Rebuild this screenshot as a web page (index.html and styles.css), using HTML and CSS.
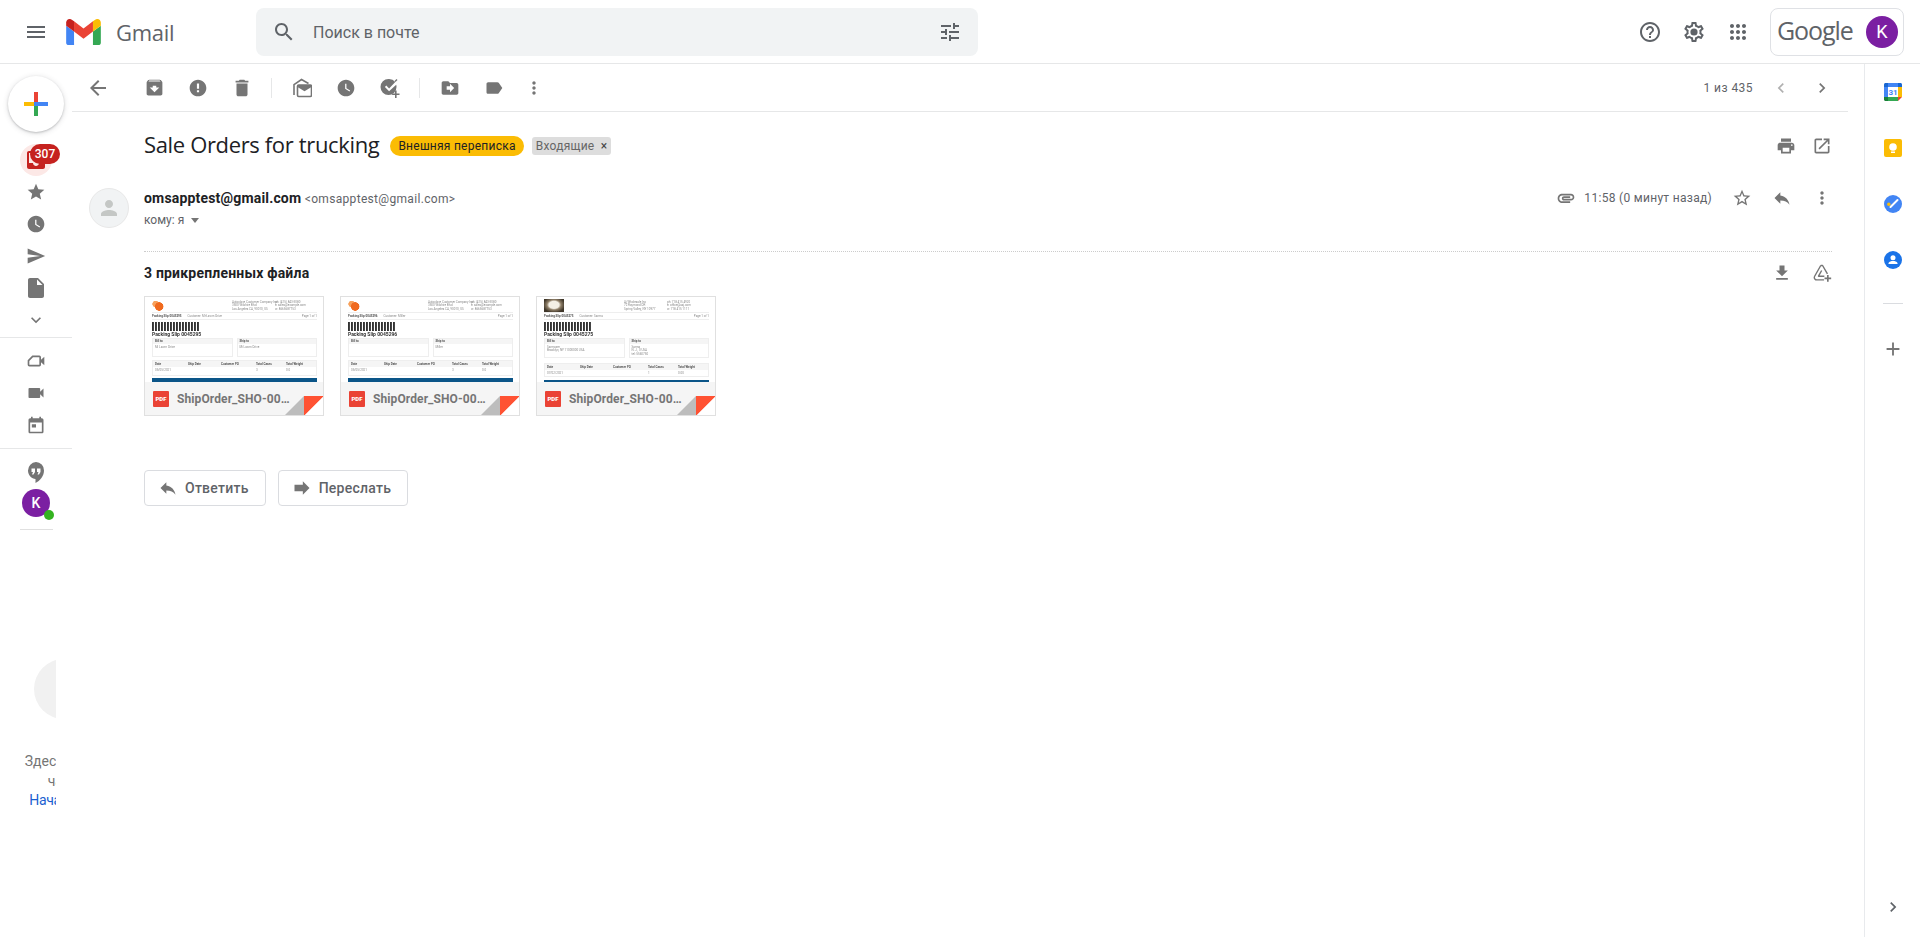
FILE: index.html
```html
<!DOCTYPE html>
<html lang="ru">
<head>
<meta charset="utf-8">
<title>Gmail</title>
<link rel="stylesheet" href="styles.css">
</head>
<body>
<svg class="sprite" aria-hidden="true">
  <symbol id="i-menu" viewBox="0 0 24 24"><path d="M3 18h18v-2H3v2zm0-5h18v-2H3v2zm0-7v2h18V6H3z"/></symbol>
  <symbol id="i-search" viewBox="0 0 24 24"><path d="M15.5 14h-.79l-.28-.27C15.41 12.59 16 11.11 16 9.5 16 5.91 13.09 3 9.5 3S3 5.91 3 9.5 5.91 16 9.5 16c1.61 0 3.09-.59 4.23-1.57l.27.28v.79l5 4.99L20.49 19l-4.99-5zm-6 0C7.01 14 5 11.99 5 9.5S7.01 5 9.5 5 14 7.01 14 9.5 11.99 14 9.5 14z"/></symbol>
  <symbol id="i-tune" viewBox="0 0 24 24"><path d="M3 17v2h6v-2H3zM3 5v2h10V5H3zm10 16v-2h8v-2h-8v-2h-2v6h2zM7 9v2H3v2h4v2h2V9H7zm14 4v-2H11v2h10zm-6-4h2V7h4V5h-4V3h-2v6z"/></symbol>
  <symbol id="i-help" viewBox="0 0 24 24"><path d="M11 18h2v-2h-2v2zm1-16C6.48 2 2 6.48 2 12s4.48 10 10 10 10-4.48 10-10S17.52 2 12 2zm0 18c-4.41 0-8-3.59-8-8s3.59-8 8-8 8 3.59 8 8-3.59 8-8 8zm0-14c-2.21 0-4 1.79-4 4h2c0-1.1.9-2 2-2s2 .9 2 2c0 2-3 1.75-3 5h2c0-2.25 3-2.5 3-5 0-2.21-1.79-4-4-4z"/></symbol>
  <symbol id="i-gear" viewBox="0 0 24 24"><path d="M19.43 12.98c.04-.32.07-.64.07-.98 0-.34-.03-.66-.07-.98l2.11-1.65c.19-.15.24-.42.12-.64l-2-3.46c-.09-.16-.26-.25-.44-.25-.06 0-.12.01-.17.03l-2.49 1c-.52-.4-1.08-.73-1.69-.98l-.38-2.65C14.46 2.18 14.25 2 14 2h-4c-.25 0-.46.18-.49.42l-.38 2.65c-.61.25-1.17.59-1.69.98l-2.49-1c-.06-.02-.12-.03-.18-.03-.17 0-.34.09-.43.25l-2 3.46c-.13.22-.07.49.12.64l2.11 1.65c-.04.32-.07.65-.07.98 0 .33.03.66.07.98l-2.11 1.65c-.19.15-.24.42-.12.64l2 3.46c.09.16.26.25.44.25.06 0 .12-.01.17-.03l2.49-1c.52.4 1.08.73 1.69.98l.38 2.65c.03.24.24.42.49.42h4c.25 0 .46-.18.49-.42l.38-2.65c.61-.25 1.17-.59 1.69-.98l2.49 1c.06.02.12.03.18.03.17 0 .34-.09.43-.25l2-3.46c.12-.22.07-.49-.12-.64l-2.11-1.65zm-1.98-1.71c.04.31.05.52.05.73 0 .21-.02.43-.05.73l-.14 1.13.89.7 1.08.84-.7 1.21-1.27-.51-1.04-.42-.9.68c-.43.32-.84.56-1.25.73l-1.06.43-.16 1.13-.2 1.35h-1.4l-.19-1.35-.16-1.13-1.06-.43c-.43-.18-.83-.41-1.23-.71l-.91-.7-1.06.43-1.27.51-.7-1.21 1.08-.84.89-.7-.14-1.13c-.03-.31-.05-.54-.05-.74s.02-.43.05-.73l.14-1.13-.89-.7-1.08-.84.7-1.21 1.27.51 1.04.42.9-.68c.43-.32.84-.56 1.25-.73l1.06-.43.16-1.13.2-1.35h1.39l.19 1.35.16 1.13 1.06.43c.43.18.83.41 1.23.71l.91.7 1.06-.43 1.27-.51.7 1.21-1.07.85-.89.7.14 1.13z"/><circle cx="12" cy="12" r="3.6"/></symbol>
  <symbol id="i-apps" viewBox="0 0 24 24"><path d="M6 8c1.1 0 2-.9 2-2s-.9-2-2-2-2 .9-2 2 .9 2 2 2zm6 12c1.1 0 2-.9 2-2s-.9-2-2-2-2 .9-2 2 .9 2 2 2zm-6 0c1.1 0 2-.9 2-2s-.9-2-2-2-2 .9-2 2 .9 2 2 2zm0-6c1.1 0 2-.9 2-2s-.9-2-2-2-2 .9-2 2 .9 2 2 2zm6 0c1.1 0 2-.9 2-2s-.9-2-2-2-2 .9-2 2 .9 2 2 2zm4-8c0 1.1.9 2 2 2s2-.9 2-2-.9-2-2-2-2 .9-2 2zm-4 2c1.1 0 2-.9 2-2s-.9-2-2-2-2 .9-2 2 .9 2 2 2zm6 6c1.1 0 2-.9 2-2s-.9-2-2-2-2 .9-2 2 .9 2 2 2zm0 6c1.1 0 2-.9 2-2s-.9-2-2-2-2 .9-2 2 .9 2 2 2z"/></symbol>
  <symbol id="i-back" viewBox="0 0 24 24"><path d="M20 11H7.83l5.59-5.59L12 4l-8 8 8 8 1.41-1.41L7.83 13H20v-2z"/></symbol>
  <symbol id="i-archive" viewBox="0 0 24 24"><path d="M20.54 5.23l-1.39-1.68C18.88 3.21 18.47 3 18 3H6c-.47 0-.88.21-1.16.55L3.46 5.23C3.17 5.57 3 6.02 3 6.5V19c0 1.1.9 2 2 2h14c1.1 0 2-.9 2-2V6.5c0-.48-.17-.93-.46-1.27zM12 17.5L6.5 12H10v-2h4v2h3.5L12 17.5zM5.12 5l.81-1h12l.94 1H5.12z"/></symbol>
  <symbol id="i-spam" viewBox="0 0 24 24"><path d="M12 2C6.48 2 2 6.48 2 12s4.48 10 10 10 10-4.48 10-10S17.52 2 12 2zm1.3 15.2h-2.6v-2.5h2.6v2.5zm0-4.2h-2.6V6.6h2.6V13z"/></symbol>
  <symbol id="i-delete" viewBox="0 0 24 24"><path d="M6 19c0 1.1.9 2 2 2h8c1.1 0 2-.9 2-2V7H6v12zM19 4h-3.5l-1-1h-5l-1 1H5v2h14V4z"/></symbol>
  <symbol id="i-unread" viewBox="0 0 20 20"><path d="M2 17V6.6L9.5 1.5l7 4" fill="none" stroke="#757575" stroke-width="1.6"/><path d="M5.5 8.2C5.5 7.5 6 7 6.700 7h11.600c.7 0 1.200.5 1.200 1.200v9.100c0 .7-.5 1.200-1.200 1.200H6.700c-.7 0-1.200-.5-1.200-1.200z" fill="none" stroke="#757575" stroke-width="1.600"/><path d="M5.500 7h14v2l-7 4.200-7-4.200z"/></symbol>
  <symbol id="i-clock" viewBox="0 0 24 24"><path d="M12 2C6.500 2 2 6.500 2 12s4.500 10 10 10 10-4.500 10-10S17.500 2 12 2zm4.200 14.200L11 13V7h1.500v5.200l4.500 2.700-.8 1.300z"/></symbol>
  <symbol id="i-task" viewBox="0 0 20 20"><path d="M8.500 1a8 8 0 1 0 8 8c0-.8-.1-1.500-.3-2.200L9.100 13.200 4.900 9l1.400-1.400 2.800 2.800L15.300 4A8 8 0 0 0 8.500 1z"/><path d="M15 3.500l2-2" stroke="#757575" stroke-width="1.500"/><path d="M15 12.500h1.600v2.900h2.900V17h-2.900v2.900H15V17h-2.900v-1.600H15z"/></symbol>
  <symbol id="i-move" viewBox="0 0 24 24"><path d="M20 6h-8l-2-2H4c-1.100 0-1.990.9-1.990 2L2 18c0 1.100.9 2 2 2h16c1.100 0 2-.9 2-2V8c0-1.100-.9-2-2-2zm-8 11v-3H8v-4h4V7l5 5-5 5z"/></symbol>
  <symbol id="i-label" viewBox="0 0 24 24"><path d="M17.630 5.840C17.270 5.330 16.670 5 16 5L5 5.010C3.900 5.010 3 5.900 3 7v10c0 1.100.9 1.990 2 1.990L16 19c.67 0 1.270-.33 1.630-.84L22 12l-4.370-6.160z"/></symbol>
  <symbol id="i-more" viewBox="0 0 24 24"><path d="M12 8c1.100 0 2-.9 2-2s-.9-2-2-2-2 .9-2 2 .9 2 2 2zm0 2c-1.100 0-2 .9-2 2s.9 2 2 2 2-.9 2-2-.9-2-2-2zm0 6c-1.100 0-2 .9-2 2s.9 2 2 2 2-.9 2-2-.9-2-2-2z"/></symbol>
  <symbol id="i-left" viewBox="0 0 24 24"><path d="M15.410 7.410L14 6l-6 6 6 6 1.410-1.410L10.830 12z"/></symbol>
  <symbol id="i-right" viewBox="0 0 24 24"><path d="M10 6L8.590 7.410 13.170 12l-4.580 4.580L10 18l6-6z"/></symbol>
  <symbol id="i-print" viewBox="0 0 24 24"><path d="M19 8H5c-1.660 0-3 1.340-3 3v6h4v4h12v-4h4v-6c0-1.660-1.340-3-3-3zm-3 11H8v-5h8v5zm3-7c-.55 0-1-.45-1-1s.45-1 1-1 1 .45 1 1-.45 1-1 1zm-1-9H6v4h12V3z"/></symbol>
  <symbol id="i-open" viewBox="0 0 24 24"><path d="M19 19H5V5h7V3H5c-1.110 0-2 .9-2 2v14c0 1.100.89 2 2 2h14c1.100 0 2-.9 2-2v-7h-2v7zM14 3v2h3.590l-9.830 9.830 1.410 1.410L19 6.410V10h2V3h-7z"/></symbol>
  <symbol id="i-person" viewBox="0 0 24 24"><path d="M12 12c2.210 0 4-1.790 4-4s-1.790-4-4-4-4 1.790-4 4 1.790 4 4 4zm0 2c-2.670 0-8 1.340-8 4v2h16v-2c0-2.660-5.330-4-8-4z"/></symbol>
  <symbol id="i-clip" viewBox="0 0 24 24"><path d="M2 12.500C2 9.460 4.460 7 7.500 7H18c2.210 0 4 1.790 4 4s-1.790 4-4 4H9.500C8.120 15 7 13.880 7 12.500S8.120 10 9.500 10H17v2H9.410c-.55 0-.55 1 0 1H18c1.100 0 2-.9 2-2s-.9-2-2-2H7.500C5.570 9 4 10.570 4 12.500S5.570 16 7.500 16H17v2H7.500C4.460 18 2 15.540 2 12.500z"/></symbol>
  <symbol id="i-star-o" viewBox="0 0 24 24"><path d="M22 9.240l-7.190-.62L12 2 9.190 8.630 2 9.240l5.460 4.730L5.820 21 12 17.270 18.180 21l-1.630-7.030L22 9.240zM12 15.400l-3.760 2.270 1-4.280-3.320-2.880 4.380-.38L12 6.100l1.710 4.040 4.380.38-3.320 2.880 1 4.280L12 15.400z"/></symbol>
  <symbol id="i-star" viewBox="0 0 24 24"><path d="M12 17.270L18.180 21l-1.640-7.030L22 9.240l-7.190-.61L12 2 9.190 8.630 2 9.240l5.460 4.730L5.820 21z"/></symbol>
  <symbol id="i-reply" viewBox="0 0 24 24"><path d="M10 9V5l-7 7 7 7v-4.100c5 0 8.500 1.600 11 5.100-1-5-4-10-11-11z"/></symbol>
  <symbol id="i-forward" viewBox="0 0 24 24"><path d="M13 8V4l8 8-8 8v-4H3V8z"/></symbol>
  <symbol id="i-download" viewBox="0 0 24 24"><path d="M19 9h-4V3H9v6H5l7 7 7-7zM5 18v2h14v-2H5z"/></symbol>
  <symbol id="i-drive" viewBox="0 0 24 24"><path d="M10.500 3 3 16.200c-.6 1.100-.2 2.400.6 3.200.5.500 1.200.8 2 .8H14.500M10.500 3h2.200L18.500 13M11.600 9 7.800 15.800h7" fill="none" stroke="#757575" stroke-width="1.700" stroke-linejoin="round"/><path d="M18 14.500h2v3h3v2h-3v3h-2v-3h-3v-2h3z"/></symbol>
  <symbol id="i-inbox" viewBox="0 0 24 24"><path d="M19 3H5c-1.100 0-2 .9-2 2v14c0 1.100.9 2 2 2h14c1.100 0 2-.9 2-2V5c0-1.100-.9-2-2-2zm0 12h-4c0 1.660-1.350 3-3 3s-3-1.340-3-3H5V5h14v10z"/></symbol>
  <symbol id="i-send" viewBox="0 0 24 24"><path d="M2.010 21L23 12 2.010 3 2 10l15 2-15 2z"/></symbol>
  <symbol id="i-draft" viewBox="0 0 24 24"><path d="M6 2c-1.100 0-1.990.9-1.990 2L4 20c0 1.100.89 2 1.990 2H18c1.100 0 2-.9 2-2V8l-6-6H6zm7 7V3.500L18.500 9H13z"/></symbol>
  <symbol id="i-expand" viewBox="0 0 24 24"><path d="M16.590 8.590L12 13.170 7.410 8.590 6 10l6 6 6-6z"/></symbol>
  <symbol id="i-meet" viewBox="0 0 24 24"><path d="M8 6.500h8c.6 0 1 .4 1 1v9c0 .6-.4 1-1 1H4c-.6 0-1-.4-1-1v-5z" fill="none" stroke="#757575" stroke-width="2"/><path d="M18 10.500l4-3.500v10l-4-3.500z"/></symbol>
  <symbol id="i-video" viewBox="0 0 24 24"><path d="M17 10.500V7c0-.55-.45-1-1-1H4c-.55 0-1 .45-1 1v10c0 .55.45 1 1 1h12c.55 0 1-.45 1-1v-3.500l4 4v-11l-4 4z"/></symbol>
  <symbol id="i-event" viewBox="0 0 24 24"><path d="M19 4h-1V2h-2v2H8V2H6v2H5c-1.100 0-2 .9-2 2v14c0 1.100.9 2 2 2h14c1.100 0 2-.9 2-2V6c0-1.100-.9-2-2-2zm0 16H5V9h14v11zM7 11h5v4H7z"/></symbol>
  <symbol id="i-hang" viewBox="0 0 24 24"><path d="M12 2a8.500 8.500 0 0 0-8 8.500c0 4.700 3.800 8.500 7.500 8.500v4c4.500-2.200 8.500-7 8.500-12.500A8.300 8.300 0 0 0 12 2z"/><path d="M7.500 8.500h3.500v3.500l-1.500 2.500H8l1-2.500H7.500zM13 8.500h3.500v3.500L15 14.500h-1.500l1-2.500H13z" fill="#fff"/></symbol>
  <symbol id="i-plus" viewBox="0 0 24 24"><path d="M19 13h-6v6h-2v-6H5v-2h6V5h2v6h6v2z"/></symbol>
</svg>

<header class="topbar">
  <button class="menu-btn"><svg class="ic ic-24 dark"><use href="#i-menu"/></svg></button>
  <svg class="gmail-logo" viewBox="52 42 88 66"><path fill="#4285f4" d="M58 108h14V74L52 59v43c0 3.320 2.690 6 6 6"/><path fill="#34a853" d="M120 108h14c3.320 0 6-2.690 6-6V59l-20 15"/><path fill="#fbbc04" d="M120 48v26l20-15v-8c0-7.420-8.470-11.650-14.400-7.200"/><path fill="#ea4335" d="M72 74V48l24 18 24-18v26L96 92"/><path fill="#c5221f" d="M52 51v8l20 15V48l-5.600-4.200c-5.940-4.450-14.400-.22-14.400 7.200"/></svg>
  <span class="gmail-word">Gmail</span>
  <div class="searchbox">
    <svg class="ic ic-24 dark"><use href="#i-search"/></svg>
    <span class="search-text">Поиск в почте</span>
    <svg class="ic ic-24 dark"><use href="#i-tune"/></svg>
  </div>
  <div class="top-actions">
    <svg class="ic ic-24 dark"><use href="#i-help"/></svg>
    <svg class="ic ic-24 dark"><use href="#i-gear"/></svg>
    <svg class="ic ic-24 dark"><use href="#i-apps"/></svg>
  </div>
  <div class="account">
    <span class="google-word">Google</span>
    <span class="account-avatar">K</span>
  </div>
</header>

<div class="layout">
  <nav class="rail">
    <button class="compose">
      <svg class="compose-plus" viewBox="0 0 24 24"><rect x="10" y="0" width="4" height="10" fill="#ea4335"/><rect x="14" y="10" width="10" height="4" fill="#4285f4"/><rect x="10" y="14" width="4" height="10" fill="#34a853"/><rect x="0" y="10" width="10" height="4" fill="#fbbc04"/><rect x="10" y="10" width="4" height="4" fill="#4285f4"/></svg>
    </button>
    <div class="rail-item first">
      <span class="inbox-dot"><svg class="ic ic-24 red"><use href="#i-inbox"/></svg></span>
      <span class="badge">307</span>
    </div>
    <div class="rail-item"><svg class="ic ic-20"><use href="#i-star"/></svg></div>
    <div class="rail-item"><svg class="ic ic-20"><use href="#i-clock"/></svg></div>
    <div class="rail-item"><svg class="ic ic-20"><use href="#i-send"/></svg></div>
    <div class="rail-item"><svg class="ic ic-24"><use href="#i-draft"/></svg></div>
    <div class="rail-item"><svg class="ic ic-20"><use href="#i-expand"/></svg></div>
    <div class="rail-rule"></div>
    <div class="rail-item gap"><svg class="ic ic-20"><use href="#i-meet"/></svg></div>
    <div class="rail-item"><svg class="ic ic-20"><use href="#i-video"/></svg></div>
    <div class="rail-item"><svg class="ic ic-20"><use href="#i-event"/></svg></div>
    <div class="rail-rule rule-two"></div>
    <div class="rail-item gap"><svg class="ic ic-24"><use href="#i-hang"/></svg></div>
    <div class="rail-user"><span class="rail-avatar">K</span><span class="online"></span></div>
    <div class="rail-short"></div>
    <div class="chat-empty">
      <div class="chat-inner">
        <div class="chat-circle"></div>
        <div class="chat-text">Здесь будут<br>чаты</div>
        <div class="chat-link">Начать чат</div>
      </div>
    </div>
  </nav>

  <main class="content">
    <div class="toolbar">
      <button class="tool"><svg class="ic ic-24"><use href="#i-back"/></svg></button>
      <button class="tool tool-first"><svg class="ic ic-21"><use href="#i-archive"/></svg></button>
      <button class="tool"><svg class="ic ic-20"><use href="#i-spam"/></svg></button>
      <button class="tool"><svg class="ic ic-22"><use href="#i-delete"/></svg></button>
      <span class="tool-sep"></span>
      <button class="tool"><svg class="ic ic-20"><use href="#i-unread"/></svg></button>
      <button class="tool"><svg class="ic ic-20"><use href="#i-clock"/></svg></button>
      <button class="tool"><svg class="ic ic-20"><use href="#i-task"/></svg></button>
      <span class="tool-sep"></span>
      <button class="tool"><svg class="ic ic-20"><use href="#i-move"/></svg></button>
      <button class="tool"><svg class="ic ic-20"><use href="#i-label"/></svg></button>
      <button class="tool tool-narrow"><svg class="ic ic-20"><use href="#i-more"/></svg></button>
      <span class="pager">1 из 435</span>
      <button class="page-btn"><svg class="ic ic-20 light"><use href="#i-left"/></svg></button>
      <button class="page-btn"><svg class="ic ic-20"><use href="#i-right"/></svg></button>
    </div>

    <div class="message">
      <div class="subject-row">
        <h1 class="subject">Sale Orders for trucking</h1>
        <span class="tag-yellow">Внешняя переписка</span>
        <span class="tag-gray">Входящие <i class="tag-x">×</i></span>
        <span class="subject-actions">
          <svg class="ic ic-20"><use href="#i-print"/></svg>
          <svg class="ic ic-20"><use href="#i-open"/></svg>
        </span>
      </div>

      <div class="sender-row">
        <span class="sender-avatar"><svg class="ic ic-24 pale"><use href="#i-person"/></svg></span>
        <div class="sender-info">
          <div class="sender-line"><b class="sender-name">omsapptest@gmail.com</b> <span class="sender-mail">&lt;omsapptest@gmail.com&gt;</span></div>
          <div class="to-line">кому: я <span class="caret"></span></div>
        </div>
        <div class="sender-meta">
          <svg class="ic ic-20"><use href="#i-clip"/></svg>
          <span class="time">11:58 (0 минут назад)</span>
          <svg class="ic ic-20 star-ic"><use href="#i-star-o"/></svg>
          <svg class="ic ic-20 reply-ic"><use href="#i-reply"/></svg>
          <svg class="ic ic-20 more-ic"><use href="#i-more"/></svg>
        </div>
      </div>

      <div class="attach-head">
        <span class="attach-title">3 прикрепленных файла</span>
        <span class="attach-actions">
          <svg class="ic ic-20"><use href="#i-download"/></svg>
          <svg class="ic ic-20"><use href="#i-drive"/></svg>
        </span>
      </div>

      <div class="cards">
        <article class="card">
          <div class="thumb">
            <div class="t-top"><span class="t-logo"></span><p class="t-addr">Autoclave Customer Company Inc<br>3500 Wilshire Blvd<br>Los Angeles CA, 90010, US</p><p class="t-contact">ph: (415) 843-3080<br>e: sales@example.com<br>w: 8665687753</p></div>
            <p class="t-meta"><b>Packing Slip 0045295</b> Customer: Mi-Lawrn Drive <span>Page 1 of 1</span></p>
            <div class="barcode"></div>
            <p class="t-title">Packing Slip 0045295</p>
            <div class="t-boxes"><div class="t-box"><b>Bill to</b><span>Mi Lawrn Drive</span></div><div class="t-box"><b>Ship to</b><span>Mi Lawrn Drive</span></div></div>
            <div class="t-table"><p class="t-th"><b>Date</b><b>Ship Date</b><b>Customer PO</b><b>Total Cases</b><b>Total Weight</b></p><p class="t-tr"><span>05/05/2021</span><span></span><span></span><span>3</span><span>0.0</span></p></div>
            <div class="t-band"></div>
          </div>
          <div class="card-foot"><span class="pdf">PDF</span><span class="card-name">ShipOrder_SHO-00…</span></div>
          <svg class="fold" viewBox="0 0 40 20"><polygon points="0,20 20,0 20,20" fill="#bdbdbd"/><polygon points="20,0 40,0 20,20" fill="#ff5233"/><polygon points="40,0 40,20 20,20" fill="#fff"/></svg>
        </article>
        <article class="card">
          <div class="thumb">
            <div class="t-top"><span class="t-logo"></span><p class="t-addr">Autoclave Customer Company Inc<br>3500 Wilshire Blvd<br>Los Angeles CA, 90010, US</p><p class="t-contact">ph: (415) 843-3080<br>e: sales@example.com<br>w: 8665687753</p></div>
            <p class="t-meta"><b>Packing Slip 0045296</b> Customer: Miller <span>Page 1 of 1</span></p>
            <div class="barcode"></div>
            <p class="t-title">Packing Slip 0045296</p>
            <div class="t-boxes"><div class="t-box"><b>Bill to</b><span></span></div><div class="t-box"><b>Ship to</b><span>Miller</span></div></div>
            <div class="t-table"><p class="t-th"><b>Date</b><b>Ship Date</b><b>Customer PO</b><b>Total Cases</b><b>Total Weight</b></p><p class="t-tr"><span>05/05/2021</span><span></span><span></span><span>3</span><span>0.0</span></p></div>
            <div class="t-band"></div>
          </div>
          <div class="card-foot"><span class="pdf">PDF</span><span class="card-name">ShipOrder_SHO-00…</span></div>
          <svg class="fold" viewBox="0 0 40 20"><polygon points="0,20 20,0 20,20" fill="#bdbdbd"/><polygon points="20,0 40,0 20,20" fill="#ff5233"/><polygon points="40,0 40,20 20,20" fill="#fff"/></svg>
        </article>
        <article class="card">
          <div class="thumb thumb-alt">
            <div class="t-top"><span class="t-photo"></span><p class="t-addr">Aj Wholesale Inc<br>72 Raymond DR<br>Spring Valley, NY 10977</p><p class="t-contact">ph: 718 415 4920<br>e: office@aaj.com<br>w: 718 415 1111</p></div>
            <p class="t-meta"><b>Packing Slip 0045275</b> Customer: Sarma <span>Page 1 of 1</span></p>
            <div class="barcode"></div>
            <p class="t-title">Packing Slip 0045275</p>
            <div class="t-boxes tall"><div class="t-box"><b>Bill to</b><span>Sarmaxer<br>Brooklyn, NY 11000000 USA</span></div><div class="t-box"><b>Ship to</b><span>Sarma<br>N. J., 0 USA<br>tel: 5560750</span></div></div>
            <div class="t-table"><p class="t-th"><b>Date</b><b>Ship Date</b><b>Customer PO</b><b>Total Cases</b><b>Total Weight</b></p><p class="t-tr"><span>07/02/2021</span><span></span><span></span><span>1</span><span>0.00</span></p></div>
            <div class="t-band"></div>
          </div>
          <div class="card-foot"><span class="pdf">PDF</span><span class="card-name">ShipOrder_SHO-00…</span></div>
          <svg class="fold" viewBox="0 0 40 20"><polygon points="0,20 20,0 20,20" fill="#bdbdbd"/><polygon points="20,0 40,0 20,20" fill="#ff5233"/><polygon points="40,0 40,20 20,20" fill="#fff"/></svg>
        </article>
      </div>

      <div class="reply-row">
        <button class="reply-btn"><svg class="ic ic-20"><use href="#i-reply"/></svg>Ответить</button>
        <button class="reply-btn"><svg class="ic ic-20"><use href="#i-forward"/></svg>Переслать</button>
      </div>
    </div>
  </main>

  <aside class="side">
    <svg class="side-app" viewBox="0 0 18 18"><rect width="18" height="18" rx="1.500" fill="#fff"/><path d="M0 4V1.500C0 .7.7 0 1.500 0H4v4z" fill="#1967d2"/><rect x="4" width="10" height="4" fill="#4285f4"/><path d="M14 0h2.500c.8 0 1.500.7 1.500 1.500V4h-4z" fill="#1967d2"/><rect y="4" width="4" height="10" fill="#4285f4"/><rect x="14" y="4" width="4" height="10" fill="#fbbc04"/><path d="M0 14h4v4H1.500C.7 18 0 17.300 0 16.500z" fill="#188038"/><rect x="4" y="14" width="10" height="4" fill="#34a853"/><path d="M14 14h4l-4 4z" fill="#ea4335"/><text x="9" y="12.300" class="cal-num">31</text></svg>
    <svg class="side-app" viewBox="0 0 18 18"><rect width="18" height="18" rx="2" fill="#fbbc04"/><circle cx="9" cy="8" r="3.800" fill="#fff"/><rect x="7" y="12.500" width="4" height="1.500" fill="#fff"/></svg>
    <svg class="side-app" viewBox="0 0 18 18"><circle cx="9" cy="9" r="9" fill="#4285f4"/><circle cx="4.800" cy="9.200" r="1.700" fill="#fbbc04"/><path d="M6.500 12l7-7" stroke="#fff" stroke-width="2" stroke-linecap="round"/></svg>
    <svg class="side-app" viewBox="0 0 18 18"><circle cx="9" cy="9" r="9" fill="#1a73e8"/><circle cx="9" cy="6.700" r="2.500" fill="#fff"/><path d="M4.500 12c.8-1.500 2.600-2 4.500-2s3.700.5 4.500 2v1h-9z" fill="#fff"/></svg>
    <div class="side-rule"></div>
    <svg class="ic ic-22 side-plus"><use href="#i-plus"/></svg>
    <svg class="ic ic-20 side-toggle dark"><use href="#i-right"/></svg>
  </aside>
</div>
</body>
</html>
```

FILE: styles.css
```css
* { box-sizing: border-box; }
html, body { margin: 0; height: 937px; overflow: hidden; background: #fff; }
body { font-family: Roboto, "Liberation Sans", sans-serif; color: #202124; font-size: 14px; }
button { border: 0; background: none; padding: 0; font: inherit; color: inherit; }
p, h1 { margin: 0; }
.sprite { display: none; }

.ic { display: block; flex: none; fill: #757575; }
.ic.dark { fill: #5f6368; }
.ic.red { fill: #c5221f; }
.ic.light { fill: #b0b0b0; }
.ic.pale { fill: #c4c7c5; }
.ic-24 { width: 24px; height: 24px; }
.ic-22 { width: 22px; height: 22px; }
.ic-21 { width: 21px; height: 21px; }
.ic-20 { width: 20px; height: 20px; }

.topbar { height: 64px; display: flex; align-items: center; border-bottom: 1px solid #e6e7e8; }
.menu-btn { margin-left: 24px; width: 24px; height: 24px; }
.gmail-logo { width: 35px; height: 26px; margin-left: 18px; }
.gmail-word { margin-left: 15px; font-size: 22px; color: #5f6368; width: 140px; font-family: "Open Sans", Roboto, sans-serif; letter-spacing: -.3px; }
.searchbox { width: 722px; height: 48px; background: #f1f3f4; border-radius: 8px; display: flex; align-items: center; padding: 0 16px; }
.search-text { margin-left: 17px; margin-top: 2px; flex: 1; font-size: 16px; color: #5f6368; }
.top-actions { margin-left: auto; display: flex; gap: 20px; }
.account { margin-left: 20px; margin-right: 16px; width: 134px; height: 48px; border: 1px solid #dfe1e5; border-radius: 8px; display: flex; align-items: center; padding-left: 6px; }
.google-word { font-family: "Open Sans", Roboto, sans-serif; font-size: 25px; letter-spacing: -1.1px; color: #5f6368; font-weight: 500; margin-top: -3px; }
.account-avatar { margin-left: auto; margin-right: 5px; width: 32px; height: 32px; border-radius: 50%; background: #7b1fa2; color: #fff; display: flex; align-items: center; justify-content: center; font-size: 18px; }

.layout { display: flex; height: 873px; }

.rail { width: 72px; flex: none; display: flex; flex-direction: column; align-items: center; padding-top: 12px; }
.compose { width: 56px; height: 56px; border-radius: 50%; background: #fff; box-shadow: 0 1px 2px rgba(60,64,67,.25), 0 1px 5px 1px rgba(60,64,67,.13); display: flex; align-items: center; justify-content: center; flex: none; }
.compose-plus { width: 24px; height: 24px; }
.rail-item { width: 72px; height: 32px; display: flex; align-items: center; justify-content: center; flex: none; position: relative; }
.rail-item.first { margin-top: 12px; }
.rail-item.gap { margin-top: 7px; }
.inbox-dot { width: 32px; height: 32px; border-radius: 50%; background: #fce8e6; display: flex; align-items: center; justify-content: center; }
.badge { position: absolute; left: 30px; top: 0; min-width: 30px; height: 20px; border-radius: 10px; background: #c5221f; color: #fff; font-size: 12px; font-weight: 500; display: flex; align-items: center; justify-content: center; }
.rail-rule { width: 72px; height: 1px; background: #e6e7e8; flex: none; margin-top: 1px; }
.rule-two { margin-top: 7px; }
.rail-user { width: 28px; height: 28px; margin-top: 1px; position: relative; flex: none; }
.rail-avatar { width: 28px; height: 28px; border-radius: 50%; background: #7b1fa2; color: #fff; display: flex; align-items: center; justify-content: center; font-size: 14px; font-weight: 500; }
.online { position: absolute; left: 22px; top: 21px; width: 10px; height: 10px; border-radius: 50%; background: #34b320; }
.rail-short { width: 33px; height: 1px; background: #e0e0e0; margin-top: 12px; flex: none; }
.chat-empty { width: 56px; margin-top: 129px; align-self: flex-start; overflow: hidden; flex: none; }
.chat-inner { width: 128px; text-align: center; }
.chat-circle { width: 60px; height: 60px; border-radius: 50%; background: #f1f1f1; margin-left: 34px; }
.chat-text { margin-top: 32px; font-size: 14px; line-height: 20px; color: #757575; }
.chat-link { font-size: 14px; line-height: 18px; color: #1a5fd0; letter-spacing: -.3px; }

.content { flex: 1; min-width: 0; }
.toolbar { width: 1776px; height: 48px; border-bottom: 1px solid #e6e7e8; display: flex; align-items: center; padding-left: 4px; }
.tool { width: 44px; height: 40px; display: flex; align-items: center; justify-content: center; flex: none; }
.tool-first { margin-left: 12px; }
.tool-narrow { width: 36px; }
.tool-sep { width: 1px; height: 20px; background: #e6e7e8; margin: 0 8px 0 7px; flex: none; }
.pager { margin-left: auto; margin-right: 7px; font-size: 12px; color: #5f6368; letter-spacing: .45px; }
.page-btn { width: 41px; height: 40px; display: flex; align-items: center; justify-content: center; flex: none; }
.page-btn:last-child { margin-right: 6px; }

.message { padding-left: 72px; padding-right: 32px; }
.subject-row { height: 48px; margin-top: 10px; display: flex; align-items: center; }
.subject { font-size: 22px; font-weight: 400; color: #202124; font-family: "Open Sans", Roboto, sans-serif; letter-spacing: -.35px; margin-bottom: 4px; }
.tag-yellow { margin-left: 11px; height: 20px; padding: 0 8px; background: #fbbc04; border-radius: 10px; font-size: 12px; line-height: 20px; color: #202124; letter-spacing: .25px; }
.tag-gray { margin-left: 8px; height: 18px; padding: 0 4px; background: #ddd; border-radius: 3px; font-size: 12px; line-height: 18px; color: #666; letter-spacing: .25px; }
.tag-x { font-style: normal; color: #444; margin-left: 3px; }
.subject-actions { margin-left: auto; display: flex; gap: 16px; }

.sender-row { display: flex; margin-top: 16px; height: 66px; border-bottom: 1px dotted #ccc; position: relative; }
.sender-avatar { width: 40px; height: 40px; margin-left: -55px; margin-top: 2px; border-radius: 50%; background: #f1f3f4; border: 1px solid #e8e8e8; display: flex; align-items: center; justify-content: center; flex: none; }
.sender-info { margin-left: 15px; padding-top: 3px; }
.sender-line { line-height: 18px; }
.sender-name { font-size: 14px; font-weight: 700; color: #202124; letter-spacing: .18px; }
.sender-mail { font-size: 12px; color: #5f6368; letter-spacing: .32px; }
.to-line { margin-top: 4px; font-size: 12px; line-height: 16px; color: #5f6368; display: flex; align-items: center; gap: 7px; }
.caret { width: 0; height: 0; border: 4px solid transparent; border-top: 5px solid #757575; border-bottom: 0; }
.sender-meta { margin-left: auto; display: flex; align-items: center; height: 24px; }
.time { margin-left: 8px; font-size: 12px; color: #5f6368; letter-spacing: .3px; }
.star-ic { margin-left: 20px; }
.reply-ic { margin-left: 20px; }
.more-ic { margin-left: 20px; }

.attach-head { display: flex; align-items: center; height: 44px; padding-bottom: 2px; }
.attach-title { font-size: 14px; font-weight: 700; color: #202124; letter-spacing: .2px; }
.attach-actions { margin-left: auto; display: flex; gap: 20px; }

.cards { display: flex; gap: 16px; }
.card { width: 180px; height: 120px; border: 1px solid #e0e0e0; position: relative; overflow: hidden; flex: none; }
.thumb { height: 85px; padding: 3px 6px 0 7px; overflow: hidden; font-size: 3px; line-height: 3.400px; color: #8a8a8a; background: #fff; filter: blur(.4px); }
.t-top { display: flex; height: 13px; border-bottom: 1px solid #eee; padding-top: 1px; }
.t-logo { width: 12px; height: 10px; background: radial-gradient(circle at 60% 55%, #f06a1e 0 4px, transparent 4.500px), radial-gradient(circle at 30% 30%, #f7a15b 0 3px, transparent 3.500px); }
.t-photo { width: 20px; height: 13px; margin-top: -2px; background: radial-gradient(ellipse at 50% 45%, #f4f0e6 0 5px, #8f7f68 7px, #3f3629 11px); }
.t-addr { margin-left: 68px; width: 43px; white-space: nowrap; }
.thumb-alt .t-addr { margin-left: 60px; }
.t-contact { white-space: nowrap; }
.t-meta { height: 7px; line-height: 6px; border-bottom: 1px solid #eee; white-space: nowrap; display: flex; gap: 6px; }
.t-meta b { color: #555; }
.t-meta span { margin-left: auto; }
.barcode { width: 48px; height: 9px; margin-top: 2px; background: repeating-linear-gradient(90deg, #333 0 1px, #fff 1px 1.500px, #444 1.500px 2.200px, #fff 2.200px 3px); }
.t-title { font-size: 5px; line-height: 7px; font-weight: 700; color: #333; white-space: nowrap; }
.t-boxes { display: flex; gap: 4px; height: 19px; }
.t-box { flex: 1; border: 1px solid #eee; }
.t-box b { display: block; background: #f5f5f5; height: 5px; line-height: 5px; padding-left: 2px; color: #555; }
.t-box span { display: block; padding: 2px 0 0 2px; }
.t-table { margin-top: 3px; height: 16px; border: 1px solid #eee; }
.t-th, .t-tr { display: grid; grid-template-columns: 33px 33px 35px 30px 1fr; padding-left: 2px; white-space: nowrap; }
.t-th { background: #f5f5f5; height: 6px; line-height: 6px; color: #555; }
.t-tr { padding-top: 2px; }
.t-band { margin-top: 2px; height: 6px; background: #0b5588; }
.thumb-alt .t-boxes.tall { height: 20px; }
.thumb-alt .t-table { margin-top: 5px; height: 14px; }
.thumb-alt .t-band { margin-top: 3px; }

.card-foot { height: 33px; background: #f5f5f5; display: flex; align-items: center; padding-left: 8px; position: relative; }
.pdf { width: 16px; height: 16px; border-radius: 1px; background: #ea4335; color: #fff; font-size: 6px; font-weight: 900; line-height: 16px; text-align: center; flex: none; }
.card-name { margin-left: 8px; font-size: 12px; font-weight: 700; color: #757575; white-space: nowrap; letter-spacing: .1px; }
.fold { position: absolute; right: -1px; bottom: -1px; width: 40px; height: 20px; }

.reply-row { display: flex; gap: 12px; margin-top: 54px; }
.reply-btn { height: 36px; border: 1px solid #dadce0; border-radius: 4px; display: flex; align-items: center; gap: 7px; padding: 0 16px 0 13px; color: #5f6368; font-size: 14px; letter-spacing: .25px; font-weight: 500; }

.side { width: 56px; flex: none; border-left: 1px solid #e8eaed; display: flex; flex-direction: column; align-items: center; padding-top: 19px; }
.side-app { width: 18px; height: 18px; flex: none; margin-bottom: 38px; }
.cal-num { font-family: Roboto, sans-serif; font-size: 8px; font-weight: 700; fill: #4285f4; text-anchor: middle; }
.side-rule { width: 20px; height: 1px; background: #dadce0; margin-top: -4px; flex: none; }
.side-plus { margin-top: 34px; }
.side-toggle { margin-top: auto; margin-bottom: 20px; }
```
